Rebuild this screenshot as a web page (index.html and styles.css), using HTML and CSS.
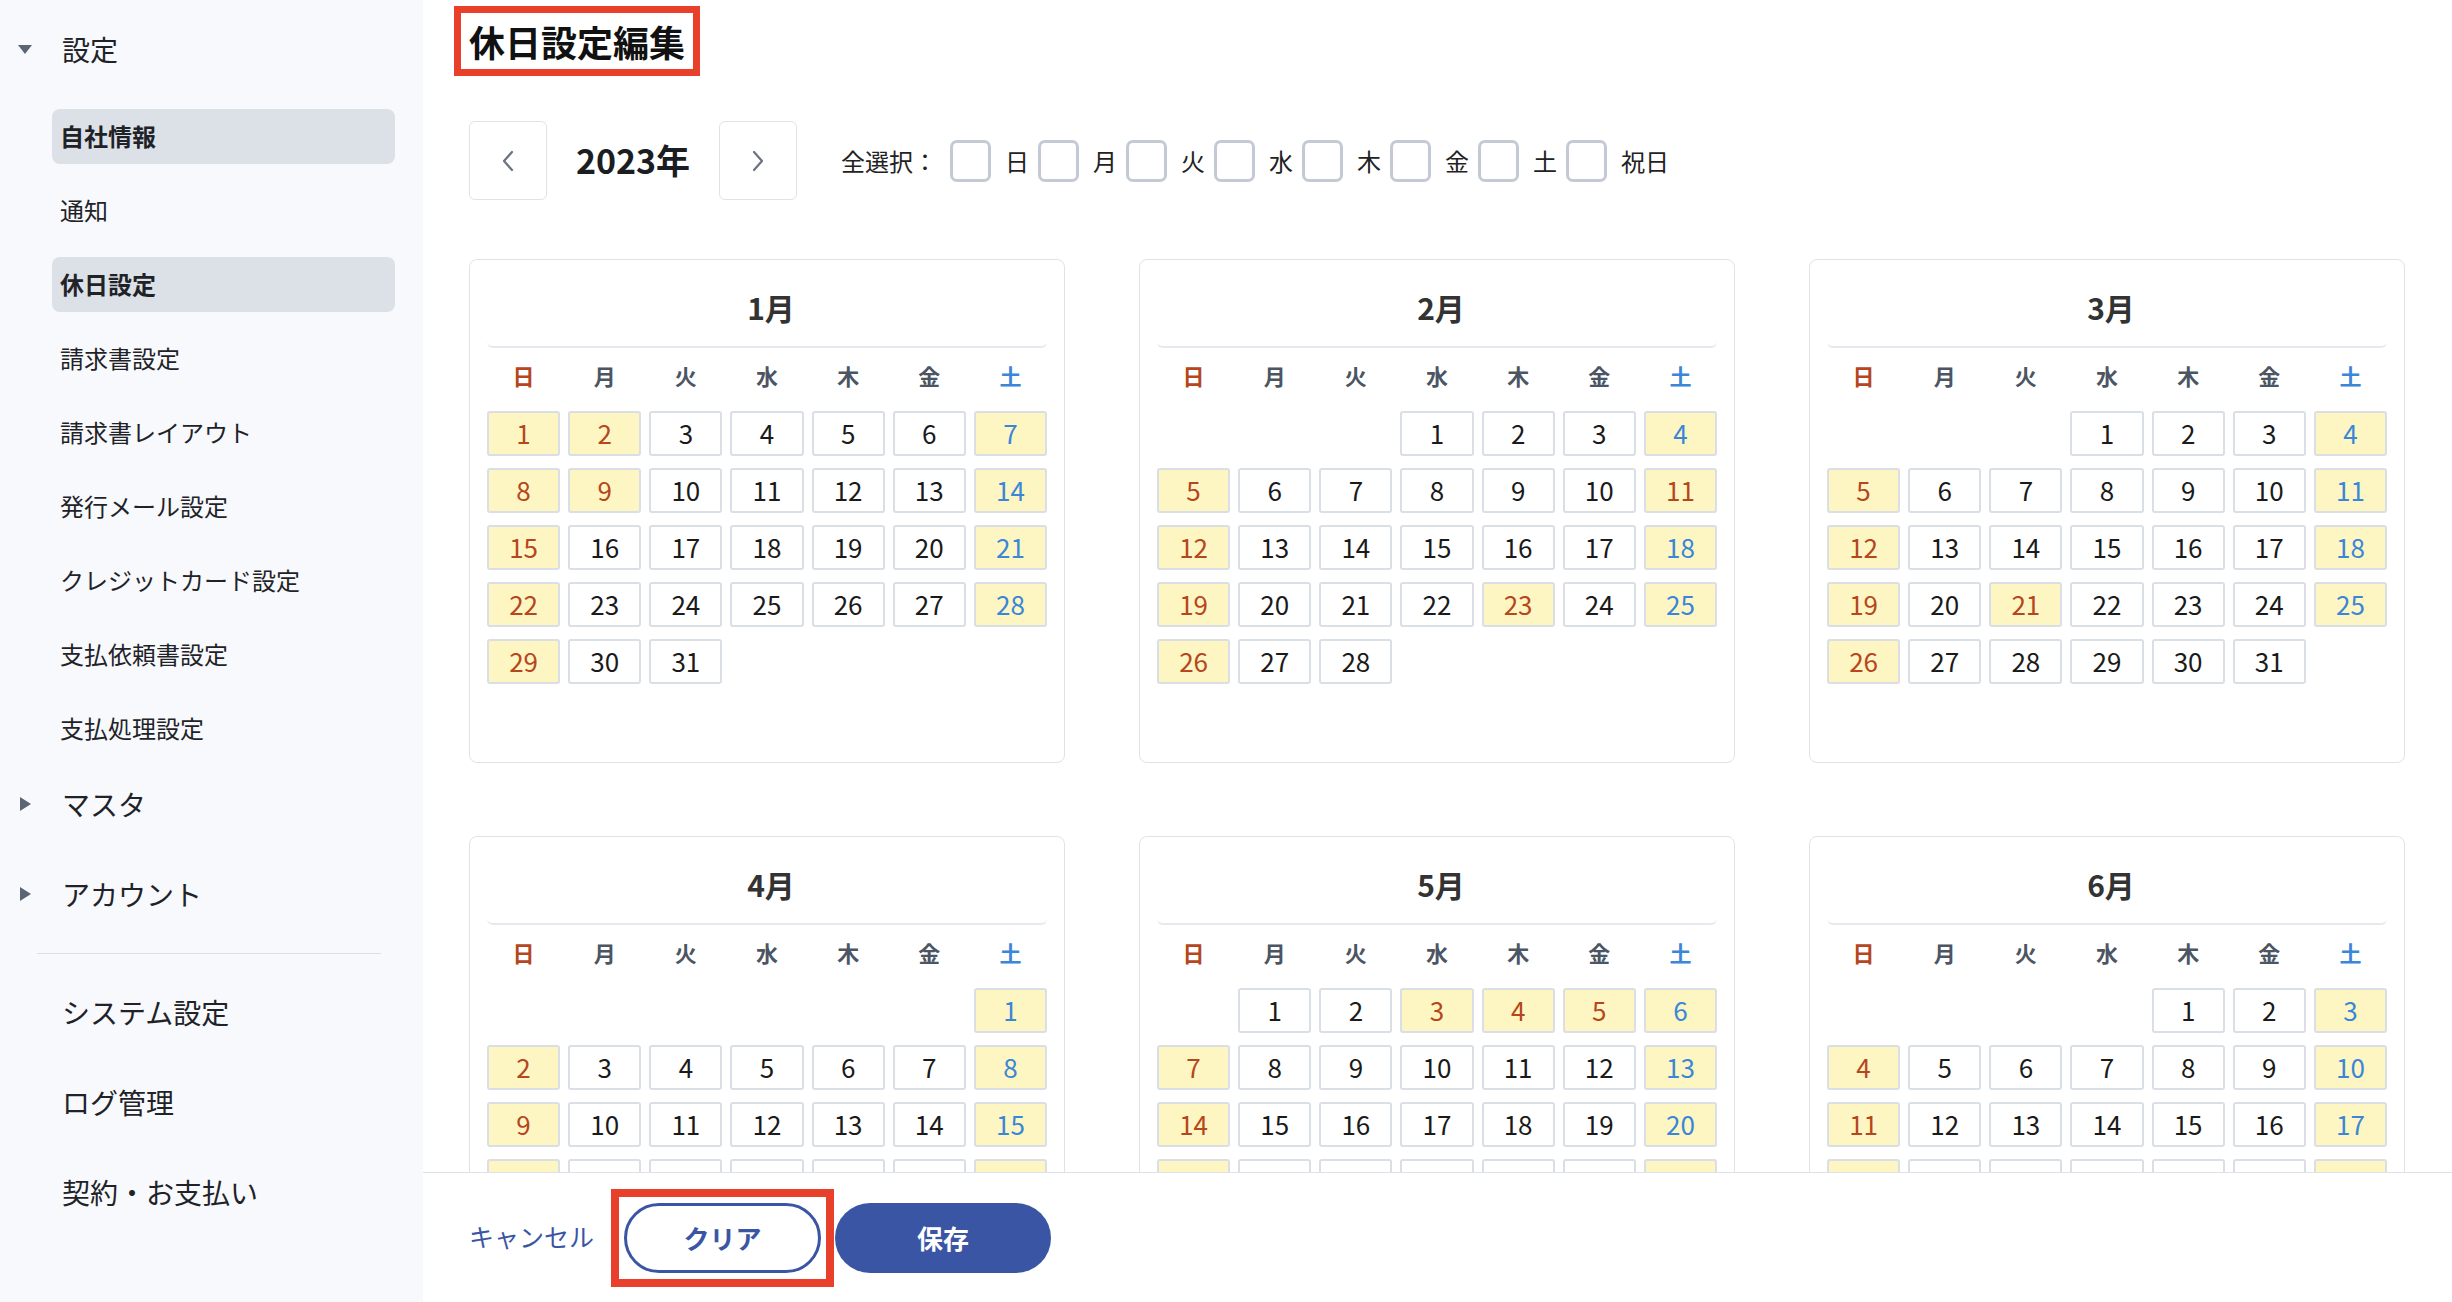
FILE: index.html
```html
<!DOCTYPE html>
<html lang="ja">
<head>
  <meta charset="UTF-8">
  <title>休日設定編集</title>
  <link rel="stylesheet" href="styles.css">
</head>
<body>
  <div class="layout">
    <aside class="sidebar">
      <div class="nav-head">
        <svg class="caret" viewBox="0 0 14 14"><polygon points="0,3 14,3 7,12" fill="#5b6573"/></svg>
        <span>設定</span>
      </div>
      <ul class="nav-sub">
        <li class="active">自社情報</li>
        <li>通知</li>
        <li class="active">休日設定</li>
        <li>請求書設定</li>
        <li>請求書レイアウト</li>
        <li>発行メール設定</li>
        <li>クレジットカード設定</li>
        <li>支払依頼書設定</li>
        <li>支払処理設定</li>
      </ul>
      <div class="nav-head">
        <svg class="caret" viewBox="0 0 14 14"><polygon points="2,0 13,7 2,14" fill="#5b6573"/></svg>
        <span>マスタ</span>
      </div>
      <div class="nav-head">
        <svg class="caret" viewBox="0 0 14 14"><polygon points="2,0 13,7 2,14" fill="#5b6573"/></svg>
        <span>アカウント</span>
      </div>
      <hr class="nav-divider">
      <div class="nav-head plain">システム設定</div>
      <div class="nav-head plain">ログ管理</div>
      <div class="nav-head plain">契約・お支払い</div>
    </aside>

    <main class="main">
      <div class="content">
        <h1 class="page-title">休日設定編集</h1>

        <div class="toolbar">
          <button class="nav-btn">
            <svg width="14" height="22" viewBox="0 0 14 22"><polyline points="11,2 3,11 11,20" fill="none" stroke="#6b7280" stroke-width="2.2" stroke-linecap="round" stroke-linejoin="round"/></svg>
          </button>
          <div class="year">2023年</div>
          <button class="nav-btn">
            <svg width="14" height="22" viewBox="0 0 14 22"><polyline points="3,2 11,11 3,20" fill="none" stroke="#6b7280" stroke-width="2.2" stroke-linecap="round" stroke-linejoin="round"/></svg>
          </button>

          <div class="select-all">
            <span class="select-label">全選択：</span>
            <span class="check"></span><span class="check-label">日</span>
            <span class="check"></span><span class="check-label">月</span>
            <span class="check"></span><span class="check-label">火</span>
            <span class="check"></span><span class="check-label">水</span>
            <span class="check"></span><span class="check-label">木</span>
            <span class="check"></span><span class="check-label">金</span>
            <span class="check"></span><span class="check-label">土</span>
            <span class="check"></span><span class="check-label">祝日</span>
          </div>
        </div>

        <div class="months" id="months"></div>
      </div>

      <footer class="footer">
        <button class="cancel-btn">キャンセル</button>
        <span class="annot"><button class="clear-btn">クリア</button></span>
        <button class="save-btn">保存</button>
      </footer>
    </main>
  </div>

  <script>
    // 2023 national holidays that fall on weekdays / Saturdays
    const holidays = {1: [2, 9], 2: [11, 23], 3: [21], 4: [29], 5: [3, 4, 5], 6: []};
    const weekdays = ['日', '月', '火', '水', '木', '金', '土'];
    const months = document.getElementById('months');

    for (let m = 1; m <= 6; m++) {
      let html = '<div class="month-title">' + m + '月</div><div class="weekdays">';
      weekdays.forEach(function (w, i) {
        const cls = i === 0 ? 'wd sun' : i === 6 ? 'wd sat' : 'wd';
        html += '<span class="' + cls + '">' + w + '</span>';
      });
      html += '</div><div class="days">';

      const start = new Date(2023, m - 1, 1).getDay();
      const last = new Date(2023, m, 0).getDate();
      for (let i = 0; i < start; i++) html += '<span></span>';
      for (let d = 1; d <= last; d++) {
        const dow = (start + d - 1) % 7;
        let cls = 'day';
        if (holidays[m].indexOf(d) >= 0) cls += ' off hol';
        else if (dow === 0) cls += ' off sun';
        else if (dow === 6) cls += ' off sat';
        html += '<span class="' + cls + '">' + d + '</span>';
      }
      html += '</div>';

      const card = document.createElement('div');
      card.className = 'month';
      card.innerHTML = html;
      months.appendChild(card);
    }
  </script>
</body>
</html>
```

FILE: styles.css
```css
* {
  box-sizing: border-box;
}

html, body {
  margin: 0;
  height: 100%;
}

body {
  font-family: "Noto Sans CJK JP", "Noto Sans", sans-serif;
  color: #1f2328;
  background: #fff;
}

.layout {
  display: flex;
  height: 100vh;
}

/* sidebar */
.sidebar {
  width: 423px;
  flex-shrink: 0;
  background: #f7f9fc;
  padding-top: 4px;
}
.nav-head {
  display: flex;
  align-items: center;
  height: 90px;
  padding-left: 18px;
  font-size: 28px;
}
.nav-head.plain {
  padding-left: 62px;
}
.caret {
  width: 14px;
  height: 14px;
  margin-right: 30px;
}
.nav-sub {
  list-style: none;
  display: flex;
  flex-direction: column;
  gap: 19px;
  margin: 15px 0 3px;
  padding: 0;
}
.nav-sub li {
  height: 55px;
  line-height: 53px;
  margin: 0 28px 0 52px;
  padding-left: 8px;
  font-size: 24px;
  border-radius: 8px;
}
.nav-sub li.active {
  background: #dce0e7;
  font-weight: 700;
}
.nav-divider {
  border: none;
  border-top: 1px solid #dcdfe5;
  margin: 14px 42px 13px 37px;
}

/* main */
.main {
  flex: 1;
  min-width: 0;
  display: flex;
  flex-direction: column;
}
.content {
  flex: 1;
  overflow: hidden;
  padding: 21px 47px 0 46px;
}
.page-title {
  display: inline-block;
  margin: 0;
  font-size: 36px;
  line-height: 40px;
  font-weight: 700;
  color: #111;
  outline: 7px solid #e8402a;
  outline-offset: 8px;
}

.toolbar {
  display: flex;
  align-items: center;
  height: 79px;
  margin-top: 59px;
}
.nav-btn {
  width: 78px;
  height: 79px;
  border: 1px solid #dfe3e8;
  border-radius: 6px;
  background: #fff;
  display: flex;
  align-items: center;
  justify-content: center;
  padding: 0;
}
.year {
  width: 172px;
  text-align: center;
  font-size: 34px;
  font-weight: 700;
  color: #1a1d21;
  padding-bottom: 3px;
}
.select-all {
  display: flex;
  align-items: center;
  margin-left: 44px;
  font-size: 24px;
  color: #222;
}
.select-label {
  margin-right: 13px;
}
.check {
  width: 41px;
  height: 42px;
  border: 3px solid #c4cad3;
  border-radius: 7px;
  background: #fff;
  margin-right: 14px;
}
.check-label {
  margin-right: 9px;
}

/* calendars */
.months {
  display: grid;
  grid-template-columns: repeat(3, 1fr);
  column-gap: 74px;
  row-gap: 73px;
  margin-top: 59px;
}
.month {
  border: 1px solid #dfe3e8;
  border-radius: 8px;
  padding: 0 17px 21px;
}
.month-title {
  text-align: center;
  font-size: 30px;
  font-weight: 700;
  line-height: 40px;
  color: #333;
  padding: 27px 0 19px 8px;
  border-bottom: 2px solid #e6e9ee;
  border-radius: 0 0 6px 6px;
}
.weekdays,
.days {
  display: grid;
  grid-template-columns: repeat(7, 1fr);
  column-gap: 8px;
}
.weekdays {
  margin-top: 12px;
  line-height: 30px;
  font-size: 22px;
  font-weight: 700;
  text-align: center;
}
.wd {
  color: #4b5563;
}
.wd.sun {
  color: #b5461e;
}
.wd.sat {
  color: #3a86d8;
}
.days {
  grid-template-rows: repeat(6, 45px);
  row-gap: 12px;
  margin-top: 21px;
}
.day {
  display: flex;
  align-items: center;
  justify-content: center;
  border: 2px solid #dadee5;
  border-radius: 3px;
  background: #fff;
  font-size: 26px;
  color: #1a1a1a;
  padding-bottom: 2px;
}
.day.off {
  background: #fef6c2;
}
.day.sun,
.day.hol {
  color: #b5461e;
}
.day.sat {
  color: #3a86d8;
}

/* footer */
.footer {
  height: 130px;
  flex-shrink: 0;
  display: flex;
  align-items: center;
  padding-left: 46px;
  border-top: 1px solid #dde1e8;
  background: #fff;
}
.footer button {
  font-family: inherit;
  cursor: pointer;
}
.cancel-btn {
  background: none;
  border: none;
  padding: 0 0 3px;
  font-size: 25px;
  color: #3b55a5;
}
.annot {
  display: inline-flex;
  border: 8px solid #e8402a;
  padding: 6px 5px;
  margin-left: 17px;
}
.clear-btn {
  width: 197px;
  height: 70px;
  border: 3px solid #3b55a5;
  border-radius: 35px;
  background: #fff;
  color: #3b55a5;
  font-size: 26px;
  font-weight: 700;
}
.save-btn {
  width: 216px;
  height: 70px;
  margin-left: 1px;
  border: none;
  border-radius: 35px;
  background: #3b55a5;
  color: #fff;
  font-size: 26px;
  font-weight: 700;
}
```
